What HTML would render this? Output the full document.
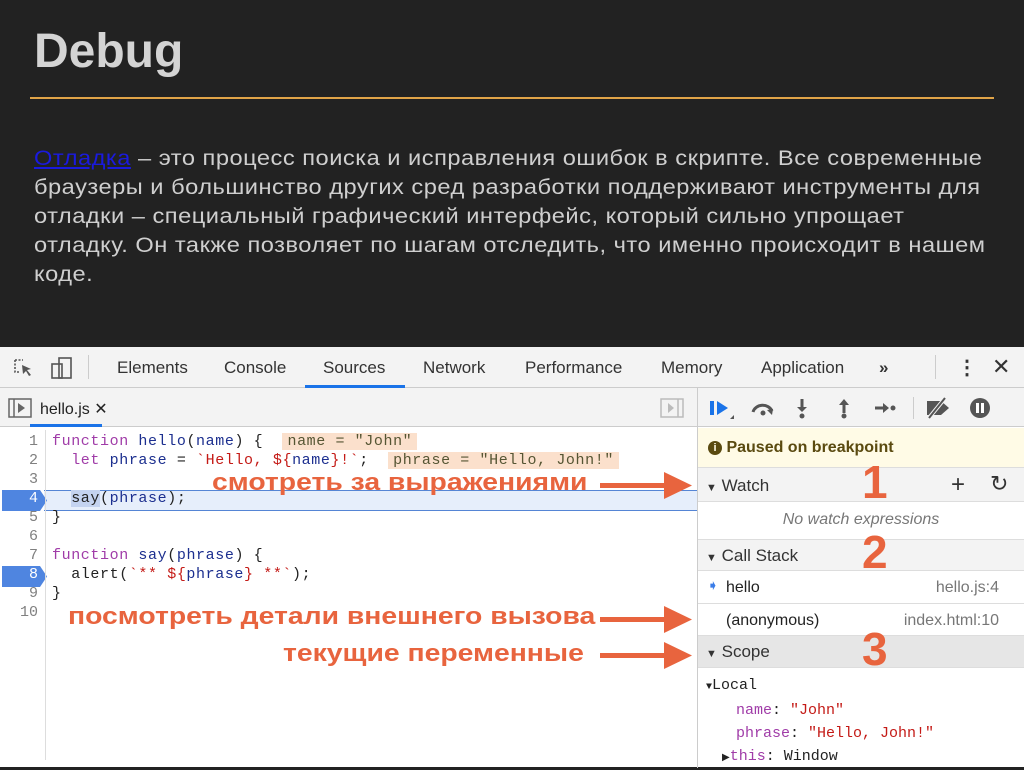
<!DOCTYPE html>
<html><head><meta charset="utf-8"><style>
*{margin:0;padding:0;box-sizing:border-box}
body{width:1024px;height:767px;background:#222;position:relative;overflow:hidden;font-family:"Liberation Sans",sans-serif}
.a{position:absolute;white-space:nowrap}
h1{position:absolute;left:34px;top:24px;font-size:48px;font-weight:bold;color:#d4d4d4}
.rule{position:absolute;left:30px;top:97px;width:964px;height:2px;background:#e0a448}
.p{position:absolute;left:34px;top:144px;width:990px;font-size:21px;line-height:29px;color:#cfcfcf;white-space:nowrap;letter-spacing:0.45px;transform:scaleX(1.125);transform-origin:left top}
.p a{color:#1a1adf;text-decoration:underline}
.dt{position:absolute;left:0;top:347px;width:1024px;height:420px;background:#fff}
.tb{position:absolute;left:0;top:0;width:1024px;height:41px;background:#f3f3f3;border-bottom:1px solid #ccc}
.t{position:absolute;top:11px;font-size:17px;color:#333}
.row2{position:absolute;top:41px;height:39px;background:#f3f3f3;border-bottom:1px solid #ccc}
.code{font-family:"Liberation Mono",monospace;font-size:15px}
.ln{position:absolute;left:0;width:38px;text-align:right;color:#808080}
.cl{position:absolute;left:52px;color:#222;letter-spacing:0.6px;white-space:pre}
.k{color:#a03ca8}.v{color:#1c2f8f}.s{color:#c41a16}
.hl{background:#fbe0cc;padding:0 5px;color:#553}
.sec{position:absolute;left:698px;width:326px;border-bottom:1px solid #ddd}
.hd{background:#f3f3f3;font-size:17px;color:#333}
.ann{position:absolute;color:#e8643e;font-weight:bold;font-size:24px;white-space:nowrap;transform:scaleX(1.18);transform-origin:left top}
.num{position:absolute;color:#e8643e;font-weight:bold;font-size:46px}
</style></head><body>
<h1>Debug</h1>
<div class="rule"></div>
<div class="p"><a>Отладка</a> – это процесс поиска и исправления ошибок в скрипте. Все современные<br>браузеры и большинство других сред разработки поддерживают инструменты для<br>отладки – специальный графический интерфейс, который сильно упрощает<br>отладку. Он также позволяет по шагам отследить, что именно происходит в нашем<br>коде.</div>

<div class="dt">
 <div class="tb">
  <svg class="a" style="left:12px;top:10px" width="22" height="22"><path d="M3 3h8M3 3v12h5" stroke="#555" fill="none" stroke-width="1.6" stroke-dasharray="2 1.5"/><path d="M10 8l9 4-4 1 4 5-2 1-3-5-3 3z" fill="#555"/></svg>
  <svg class="a" style="left:50px;top:9px" width="24" height="24"><rect x="2" y="8" width="10" height="14" stroke="#555" fill="none" stroke-width="1.6"/><rect x="9" y="2" width="12" height="20" stroke="#555" fill="none" stroke-width="1.6"/></svg>
  <div class="a" style="left:88px;top:8px;width:1px;height:24px;background:#ccc"></div>
  <span class="t" style="left:117px">Elements</span>
  <span class="t" style="left:224px">Console</span>
  <span class="t" style="left:323px">Sources</span>
  <div class="a" style="left:305px;top:38px;width:100px;height:3px;background:#1a73e8"></div>
  <span class="t" style="left:423px">Network</span>
  <span class="t" style="left:525px">Performance</span>
  <span class="t" style="left:661px">Memory</span>
  <span class="t" style="left:761px">Application</span>
  <span class="t" style="left:879px;font-weight:bold">»</span>
  <div class="a" style="left:935px;top:8px;width:1px;height:24px;background:#ccc"></div>
  <span class="t" style="left:957px;font-weight:bold;font-size:20px;top:8px">⋮</span>
  <span class="t" style="left:992px;font-size:22px;top:7px">✕</span>
 </div>
 <div class="row2" style="left:0;width:697px">
  <svg class="a" style="left:8px;top:10px" width="24" height="20"><rect x="1" y="1" width="22" height="18" fill="none" stroke="#666" stroke-width="1.5"/><line x1="6" y1="1" x2="6" y2="19" stroke="#666" stroke-width="1.5"/><path d="M10 5l7 5-7 5z" fill="#666"/></svg>
  <span class="a" style="left:40px;top:11px;font-size:16px;color:#222">hello.js ✕</span>
  <div class="a" style="left:30px;top:36px;width:72px;height:3px;background:#1a73e8"></div>
  <svg class="a" style="left:660px;top:10px" width="24" height="20"><rect x="1" y="1" width="22" height="18" fill="none" stroke="#bbb" stroke-width="1.5"/><line x1="18" y1="1" x2="18" y2="19" stroke="#bbb" stroke-width="1.5"/><path d="M8 5l6 5-6 5z" fill="#bbb"/></svg>
 </div>
 <div class="a" style="left:697px;top:41px;width:1px;height:380px;background:#ccc"></div>
 <div class="row2" style="left:698px;width:326px">
  <svg class="a" style="left:10px;top:9px" width="28" height="24"><rect x="2" y="4" width="4" height="14" fill="#1a73e8"/><path d="M9 4l11 7-11 7z" fill="#1a73e8"/><path d="M22 22l4-4v4z" fill="#555"/></svg>
  <svg class="a" style="left:52px;top:11px" width="26" height="18"><path d="M3 13a10 9 0 0 1 19-1" stroke="#555" stroke-width="3" fill="none"/><path d="M17 11l6-1-1 6z" fill="#555"/><circle cx="13" cy="14" r="2.5" fill="#555"/></svg>
  <svg class="a" style="left:96px;top:9px" width="16" height="22"><path d="M8 2v10" stroke="#555" stroke-width="3"/><path d="M3 10l5 5 5-5z" fill="#555"/><circle cx="8" cy="19" r="2.5" fill="#555"/></svg>
  <svg class="a" style="left:138px;top:9px" width="16" height="22"><path d="M8 6v10" stroke="#555" stroke-width="3"/><path d="M3 8l5-6 5 6z" fill="#555"/><circle cx="8" cy="19" r="2.5" fill="#555"/></svg>
  <svg class="a" style="left:175px;top:11px" width="24" height="18"><path d="M2 9h10" stroke="#555" stroke-width="3"/><path d="M10 4l6 5-6 5z" fill="#555"/><circle cx="20" cy="9" r="2.5" fill="#555"/></svg>
  <div class="a" style="left:215px;top:9px;width:1px;height:22px;background:#ccc"></div>
  <svg class="a" style="left:226px;top:9px" width="28" height="22"><path d="M3 4h14l8 7-8 7H3z" fill="#555"/><path d="M4 22L22 0" stroke="#f3f3f3" stroke-width="4"/><path d="M5 21L21 1" stroke="#555" stroke-width="2"/></svg>
  <svg class="a" style="left:271px;top:9px" width="22" height="22"><circle cx="11" cy="11" r="10" fill="#555"/><rect x="7" y="6" width="3" height="10" fill="#fff"/><rect x="12" y="6" width="3" height="10" fill="#fff"/></svg>
 </div>
</div>

<!-- code -->
<div class="code">
 <div class="a" style="left:44px;top:490px;width:653px;height:21px;background:#e6eefb;border-top:1px solid #5585d5;border-bottom:1px solid #5585d5"></div>
 <svg class="a" style="left:2px;top:490px" width="46" height="21"><path d="M0 0h38l7 10.5-7 10.5H0z" fill="#4f85e0"/></svg>
 <svg class="a" style="left:2px;top:566px" width="46" height="21"><path d="M0 0h38l7 10.5-7 10.5H0z" fill="#4f85e0"/></svg>
 <div class="ln" style="top:433px">1</div><div class="ln" style="top:452px">2</div><div class="ln" style="top:471px">3</div><div class="ln" style="top:490px;color:#fff">4</div><div class="ln" style="top:509px">5</div><div class="ln" style="top:528px">6</div><div class="ln" style="top:547px">7</div><div class="ln" style="top:566px;color:#fff">8</div><div class="ln" style="top:585px">9</div><div class="ln" style="top:604px">10</div>
 <div class="a" style="left:45px;top:430px;width:1px;height:330px;background:#ddd"></div>
 <div class="cl" style="top:433px"><span class="k">function</span> <span class="v">hello</span>(<span class="v">name</span>) {  <span class="hl">name = "John"</span></div>
 <div class="cl" style="top:452px">  <span class="k">let</span> <span class="v">phrase</span> = <span class="s">`Hello, ${</span><span class="v">name</span><span class="s">}!`</span>;  <span class="hl">phrase = "Hello, John!"</span></div>
 <div class="cl" style="top:490px">  <span style="background:#c4d3f0">say</span>(<span class="v">phrase</span>);</div>
 <div class="cl" style="top:509px">}</div>
 <div class="cl" style="top:547px"><span class="k">function</span> <span class="v">say</span>(<span class="v">phrase</span>) {</div>
 <div class="cl" style="top:566px">  alert(<span class="s">`** ${</span><span class="v">phrase</span><span class="s">} **`</span>);</div>
 <div class="cl" style="top:585px">}</div>
</div>

<!-- right pane -->
<div class="sec" style="top:428px;height:40px;background:#fffbe6;font-size:16px;font-weight:bold;color:#5a4a10;padding:11px 0 0 10px"><span style="display:inline-block;width:14px;height:14px;border-radius:7px;background:#5a4a10;color:#fffbe6;font-size:11px;text-align:center;line-height:14px;vertical-align:1px">i</span> Paused on breakpoint</div>
<div class="sec hd" style="top:468px;height:34px;padding:8px 0 0 8px"><span style="font-size:11px">▼</span> Watch<span class="a" style="left:253px;top:3px;font-size:24px">+</span><span class="a" style="left:292px;top:3px;font-size:22px">↻</span></div>
<div class="sec" style="top:502px;height:38px;font-size:16px;font-style:italic;color:#777;text-align:center;padding-top:9px">No watch expressions</div>
<div class="sec hd" style="top:540px;height:31px;padding:6px 0 0 8px"><span style="font-size:11px">▼</span> Call Stack</div>
<div class="sec" style="top:571px;height:33px;font-size:16px;color:#222;padding:8px 0 0 28px">hello<span class="a" style="left:9px;top:6px;color:#3b7de8;font-size:14px">➧</span><span class="a" style="right:25px;top:8px;color:#777">hello.js:4</span></div>
<div class="sec" style="top:604px;height:32px;font-size:16px;color:#222;padding:8px 0 0 28px">(anonymous)<span class="a" style="right:25px;top:8px;color:#777">index.html:10</span></div>
<div class="sec hd" style="top:636px;height:32px;padding:6px 0 0 8px;background:#e6e6e6"><span style="font-size:11px">▼</span> Scope</div>
<div class="code" style="position:absolute;left:706px;top:674px;line-height:23px;color:#222">
 <div><span style="font-size:10px">▼</span>Local</div>
 <div style="padding-left:30px"><span class="k">name</span>: <span class="s">"John"</span></div>
 <div style="padding-left:30px"><span class="k">phrase</span>: <span class="s">"Hello, John!"</span></div>
 <div style="padding-left:16px"><span style="font-size:10px">▶</span><span class="k">this</span>: Window</div>
</div>

<!-- annotations -->
<div class="ann" style="left:212px;top:469px">смотреть за выражениями</div>
<div class="ann" style="left:68px;top:603px">посмотреть детали внешнего вызова</div>
<div class="ann" style="left:283px;top:640px">текущие переменные</div>
<svg class="a" style="left:600px;top:470px" width="95" height="200"><g fill="#e8643e"><rect x="0" y="13" width="70" height="5"/><path d="M64 2l28 13.5-28 13.5z"/><rect x="0" y="147" width="70" height="5"/><path d="M64 136l28 13.5-28 13.5z"/><rect x="0" y="183" width="70" height="5"/><path d="M64 172l28 13.5-28 13.5z"/></g></svg>
<div class="num" style="left:862px;top:455px">1</div>
<div class="num" style="left:862px;top:525px">2</div>
<div class="num" style="left:862px;top:622px">3</div>
</body></html>
